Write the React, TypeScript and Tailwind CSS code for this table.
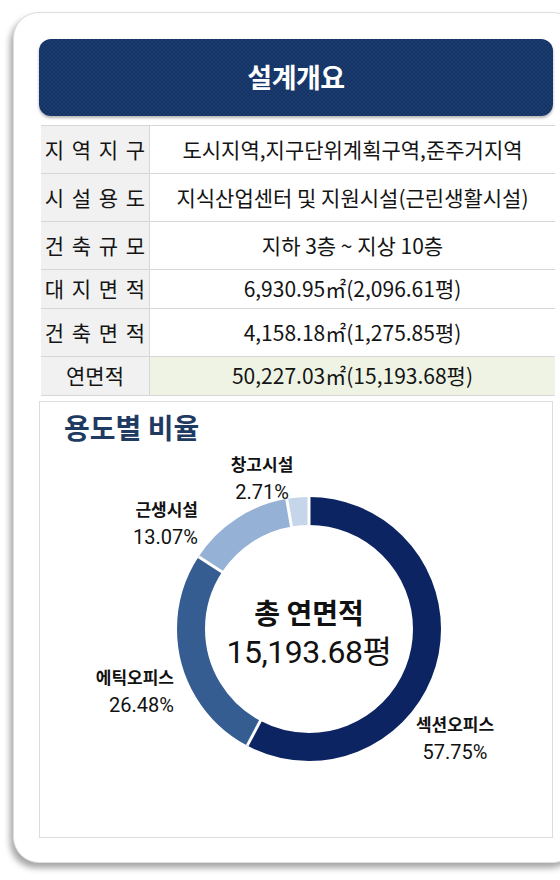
const rows = [
  { label: '지 역 지 구', value: '도시지역,지구단위계획구역,준주거지역', h: 'h-[48px]' },
  { label: '시 설 용 도', value: '지식산업센터 및 지원시설(근린생활시설)', h: 'h-[48px]' },
  { label: '건 축 규 모', value: '지하 3층 ~ 지상 10층', h: 'h-[48px]' },
  { label: '대 지 면 적', value: '6,930.95㎡(2,096.61평)', h: 'h-[39px]' },
  { label: '건 축 면 적', value: '4,158.18㎡(1,275.85평)', h: 'h-[48px]' },
];

// donut data, clockwise from 12 o'clock
const parts = [
  { pct: 57.75, color: '#0c2461' },
  { pct: 26.48, color: '#365d91' },
  { pct: 13.07, color: '#95b2d6' },
  { pct: 2.71, color: '#c5d5ea' },
];

const R = 118;
const C = 2 * Math.PI * R;

function Donut() {
  let start = 0;
  const arcs = parts.map((p) => {
    const len = (p.pct / 100) * C;
    const a = { ...p, len, start };
    start += len;
    return a;
  });
  let acc = 0;
  const cuts = parts.map((p) => {
    const deg = (acc / 100) * 360;
    acc += p.pct;
    return deg;
  });

  return (
    <svg width="264" height="264" viewBox="0 0 264 264">
      <g transform="rotate(-90 132 132)">
        {arcs.map((a) => (
          <circle
            key={a.color}
            cx="132"
            cy="132"
            r={R}
            fill="none"
            stroke={a.color}
            strokeWidth="28"
            strokeDasharray={`${a.len} ${C - a.len}`}
            strokeDashoffset={-a.start}
          />
        ))}
      </g>
      {cuts.map((deg) => (
        <line
          key={deg}
          x1="132"
          y1="0"
          x2="132"
          y2="30"
          stroke="#fff"
          strokeWidth="3"
          transform={`rotate(${deg} 132 132)`}
        />
      ))}
    </svg>
  );
}

export default function App() {
  return (
    <div className="w-[560px] h-[880px] overflow-hidden bg-white font-['Noto_Sans_CJK_KR',sans-serif]">
      <div className="ml-[13px] mt-[12px] w-[566px] h-[851px] rounded-[26px] border border-[#dedede] bg-white px-[25px] pt-[26px] shadow-[-3px_5px_6px_rgba(0,0,0,0.35)]">
        <div className="h-[77px] rounded-[12px] bg-[#17386c] bg-[image:repeating-conic-gradient(#1b3d74_0%_25%,#14325f_0%_50%)] bg-[length:4px_4px] shadow-[0_2px_3px_rgba(0,0,0,0.3)] flex items-center justify-center">
          <span className="text-white text-[27px] font-bold tracking-[-0.5px]">설계개요</span>
        </div>

        <div className="mt-[9px] ml-[2px] mr-[-2px] border-t border-[#d6d6d6] text-[21px] text-[#141414]">
          {rows.map((r) => (
            <div key={r.label} className={`grid grid-cols-[109px_1fr] border-b border-[#d6d6d6] ${r.h}`}>
              <div className="bg-[#f1f1f1] border-r border-[#d6d6d6] flex items-center justify-center [word-spacing:3px]">{r.label}</div>
              <div className="flex items-center justify-center">{r.value}</div>
            </div>
          ))}
          <div className="grid grid-cols-[109px_1fr] border-b border-[#d6d6d6] h-[39px]">
            <div className="bg-[#f1f1f1] border-r border-[#d6d6d6] flex items-center justify-center">연면적</div>
            <div className="bg-[#eef3e4] flex items-center justify-center">50,227.03㎡(15,193.68평)</div>
          </div>
        </div>

        <div className="mt-[5px] h-[437px] border border-[#dcdcdc]">
          <div className="pt-[8px] pl-[24px] text-[28px] leading-[34px] font-bold text-[#1f3b62]">용도별 비율</div>
          <div className="relative h-[390px] font-['Roboto','Noto_Sans_CJK_KR',sans-serif] text-[20px] leading-[27px] text-[#111]">
            <div className="absolute left-[137px] top-[53px] w-[264px] h-[264px]">
              <Donut />
              <div className="absolute inset-0 flex flex-col items-center justify-center pt-[8px]">
                <span className="text-[28px] leading-[38px] font-bold font-['Noto_Sans_CJK_KR',sans-serif]">총 연면적</span>
                <span className="text-[32px] leading-[42px] tracking-[-0.5px]">15,193.68평</span>
              </div>
            </div>
            <div className="absolute left-[222px] top-[8px] -translate-x-1/2 text-center">
              <div className="text-[17px] font-bold">창고시설</div>
              <div>2.71%</div>
            </div>
            <div className="absolute right-[354px] top-[53px] text-right">
              <div className="text-[17px] font-bold">근생시설</div>
              <div>13.07%</div>
            </div>
            <div className="absolute right-[378px] top-[221px] text-right">
              <div className="text-[17px] font-bold">에틱오피스</div>
              <div>26.48%</div>
            </div>
            <div className="absolute left-[415px] top-[268px] -translate-x-1/2 text-center">
              <div className="text-[17px] font-bold">섹션오피스</div>
              <div>57.75%</div>
            </div>
          </div>
        </div>
      </div>
    </div>
  );
}
